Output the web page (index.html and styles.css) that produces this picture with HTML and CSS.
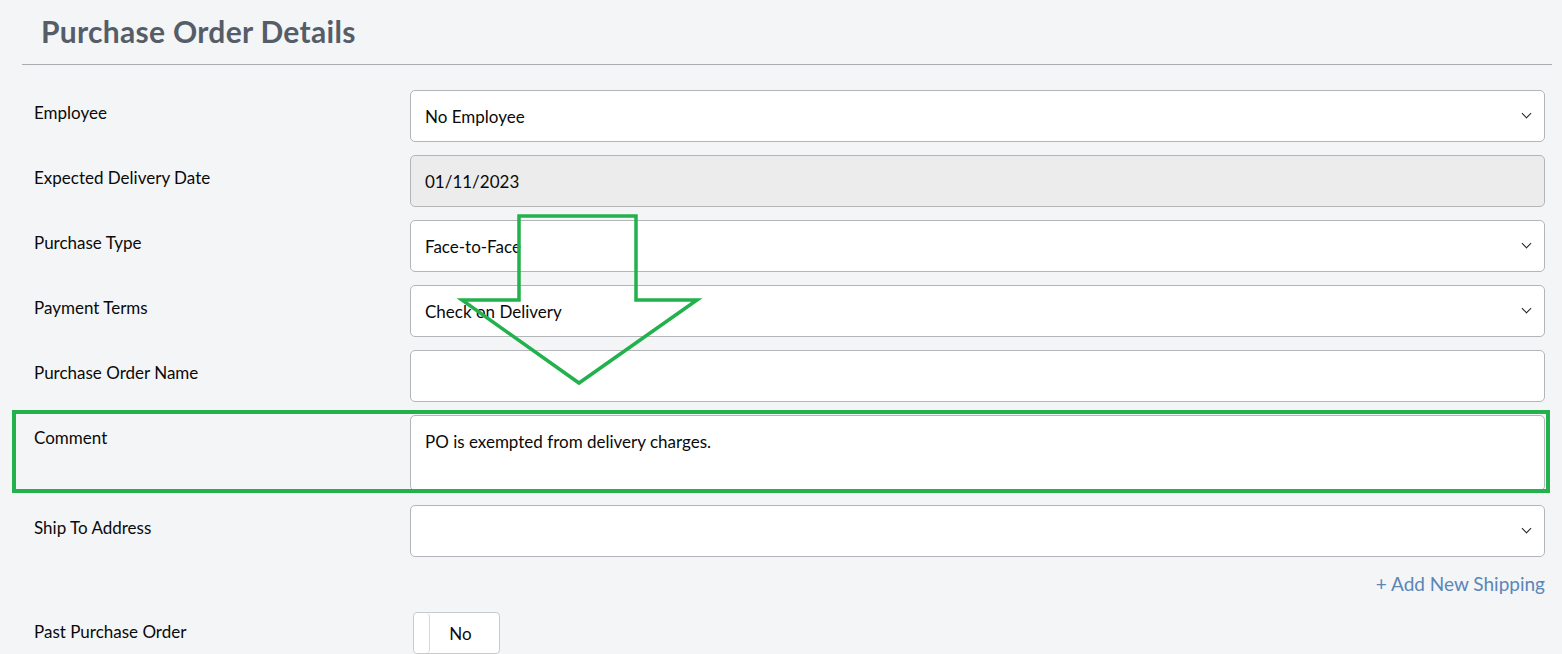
FILE: index.html
```html
<!DOCTYPE html>
<html lang="en">
<head>
    <meta charset="UTF-8">
    <title>Purchase Order Details</title>
    <link rel="stylesheet" href="styles.css">
</head>
<body>
    <div class="po-panel">
        <h2 class="po-title">Purchase Order Details</h2>

        <div class="po-form">
            <div class="form-row">
                <label class="form-label">Employee</label>
                <div class="field select-field">No Employee<span class="caret"></span></div>
            </div>
            <div class="form-row">
                <label class="form-label">Expected Delivery Date</label>
                <div class="field field-disabled">01/11/2023</div>
            </div>
            <div class="form-row">
                <label class="form-label">Purchase Type</label>
                <div class="field select-field">Face-to-Face<span class="caret"></span></div>
            </div>
            <div class="form-row">
                <label class="form-label">Payment Terms</label>
                <div class="field select-field">Check on Delivery<span class="caret"></span></div>
            </div>
            <div class="form-row">
                <label class="form-label">Purchase Order Name</label>
                <div class="field"></div>
            </div>
            <div class="form-row comment-row">
                <label class="form-label">Comment</label>
                <div class="field field-textarea">PO is exempted from delivery charges.</div>
            </div>
            <div class="form-row">
                <label class="form-label">Ship To Address</label>
                <div class="field select-field"><span class="caret"></span></div>
            </div>
            <div class="add-link-row">
                <a class="add-link">+ Add New Shipping</a>
            </div>
            <div class="form-row toggle-row">
                <label class="form-label">Past Purchase Order</label>
                <div class="toggle">
                    <span class="toggle-knob"></span>
                    <span class="toggle-text">No</span>
                </div>
            </div>
        </div>

        <!-- annotation drawn on top of the screenshot -->
        <svg class="annotation" width="1562" height="654" viewBox="0 0 1562 654">
            <rect x="14" y="412" width="1534" height="79" fill="none" stroke="#22b14c" stroke-width="4"/>
            <polygon points="519,216 636,216 636,300 697,300 579,383 462,300 519,300" fill="none" stroke="#22b14c" stroke-width="3.5"/>
        </svg>
    </div>
</body>
</html>
```

FILE: styles.css
```css
* {
    box-sizing: border-box;
}
body {
    margin: 0;
    background: #f4f5f7;
    font-family: Lato, "Open Sans", sans-serif;
    color: #0a0a0a;
}
.po-panel {
    position: relative;
    height: 654px;
    overflow: hidden;
    padding: 0 10px 0 22px;
}
.po-title {
    margin: 0;
    padding: 13px 0 0 19px;
    height: 65px;
    font-size: 30px;
    font-weight: 700;
    letter-spacing: 0.3px;
    color: #555d68;
    border-bottom: 1px solid #a9abae;
}
.po-form {
    padding: 25px 7px 0 12px;
}
.form-row {
    display: flex;
    align-items: flex-start;
    margin-bottom: 13px;
}
.comment-row {
    margin-bottom: 14px;
}
.form-label {
    width: 376px;
    flex-shrink: 0;
    padding-top: 12px;
    font-size: 17px;
    line-height: 22px;
}
.field {
    position: relative;
    flex: 1;
    height: 52px;
    display: flex;
    align-items: center;
    padding: 0 14px;
    background: #fff;
    border: 1px solid #b3b5b8;
    border-radius: 5px;
    font-size: 17px;
}
.field-disabled {
    background: #ececec;
}
.field-textarea {
    height: 76px;
    align-items: flex-start;
    padding-top: 15px;
}
.caret {
    position: absolute;
    right: 14px;
    top: 19px;
    width: 7px;
    height: 7px;
    border-right: 1.5px solid #222;
    border-bottom: 1.5px solid #222;
    transform: rotate(45deg);
}
.add-link-row {
    display: flex;
    justify-content: flex-end;
    align-items: flex-start;
    padding-top: 3px;
    height: 42px;
}
.add-link {
    font-size: 19px;
    line-height: 22px;
    color: #5b86b8;
}
.toggle-row .form-label {
    padding-top: 9px;
}
.toggle {
    display: flex;
    width: 87px;
    height: 42px;
    margin-left: 3px;
    border: 1px solid #c8cacc;
    border-radius: 4px;
    background: #fff;
    overflow: hidden;
}
.toggle-knob {
    width: 16px;
    border-right: 1px solid #d4d6d8;
    border-radius: 4px;
    background: #fff;
}
.toggle-text {
    flex: 1;
    display: flex;
    align-items: center;
    justify-content: center;
    padding-right: 8px;
    font-size: 17px;
}
.annotation {
    position: absolute;
    left: 0;
    top: 0;
    pointer-events: none;
}
```
